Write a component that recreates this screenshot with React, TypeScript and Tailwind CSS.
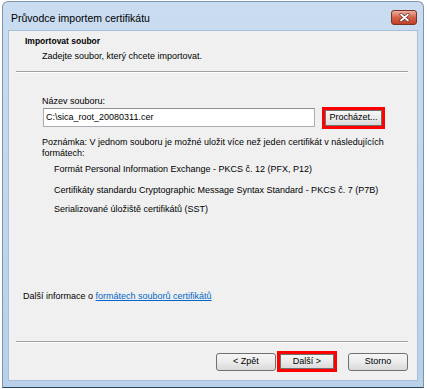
export default function App() {
  const btn =
    'flex items-center justify-center rounded-[3px] border border-[#707070] bg-gradient-to-b from-[#f6f6f6] via-[#ebebeb] to-[#d9d9d9] text-[9px] text-black';

  return (
    <div className="w-[427px] h-[389px] bg-white pl-[2px] pt-[1px] font-['Liberation_Sans',Arial,sans-serif] text-[9px] text-black">
      <div className="w-[422px] h-[387px] flex flex-col rounded-t-[6px] border border-[#7d94ae] border-b-[#2c4656] bg-gradient-to-b from-[#c9dcf0] to-[#b9d0ea] px-[5px] pb-[6px]">
        {/* title bar */}
        <div className="h-[28px] flex items-start justify-between">
          <div className="pl-[3px] pt-[9px] text-[10.5px] leading-[14px] text-black">
            Průvodce importem certifikátu
          </div>
          <div className="mt-[8px] mr-[1px] w-[26px] h-[15px] rounded-[3px] border border-[#7a3325] bg-gradient-to-b from-[#eab0a3] via-[#d5614a] to-[#c33e26] flex items-center justify-center">
            <svg width="11" height="9" viewBox="0 0 11 9">
              <path d="M2 1.5 L9 7.5 M9 1.5 L2 7.5" stroke="#5b2418" strokeWidth="3" strokeLinecap="round" />
              <path d="M2 1.5 L9 7.5 M9 1.5 L2 7.5" stroke="#ffffff" strokeWidth="1.8" strokeLinecap="round" />
            </svg>
          </div>
        </div>

        {/* content panel */}
        <div className="flex-1 flex flex-col bg-[#f0f0f0] border border-[#a9bfd8] pt-[4px]">
          <div className="pl-[16px] font-bold text-[8.5px] leading-[12px]">Importovat soubor</div>
          <div className="pl-[33px] mt-[3px] leading-[12px]">Zadejte soubor, který chcete importovat.</div>
          <div className="ml-[7px] mr-[9px] mt-[9px] border-t border-[#a0a0a0] border-b border-b-white" />

          <div className="pl-[33px]">
            <div className="mt-[22px] leading-[12px]">Název souboru:</div>
            <div className="flex items-start">
              <div className="ml-[1px] mt-[1px] w-[272px] h-[19px] bg-white border border-[#abadb3] border-t-[#8e8f8f] flex items-center pl-[2px]">
                C:\sica_root_20080311.cer
              </div>
              <div className="ml-[7px] w-[63px] h-[22px] border-[3px] border-[#ff0000]">
                <div className={btn + ' w-full h-full rounded-none border-[#8a8a8a]'}>Procházet...</div>
              </div>
            </div>
            <div className="mt-[8px] leading-[11px] pr-[30px]">
              Poznámka: V jednom souboru je možné uložit více než jeden certifikát v následujících formátech:
            </div>
            <div className="pl-[12px]">
              <div className="mt-[4px] leading-[12px]">Formát Personal Information Exchange - PKCS č. 12 (PFX, P12)</div>
              <div className="mt-[9px] leading-[12px]">
                Certifikáty standardu Cryptographic Message Syntax Standard - PKCS č. 7 (P7B)
              </div>
              <div className="mt-[7px] leading-[12px]">Serializované úložiště certifikátů (SST)</div>
            </div>
          </div>

          <div className="flex-1" />
          <div className="pl-[14px] leading-[12px]">
            Další informace o{' '}
            <span className="text-[#0066cc] underline">formátech souborů certifikátů</span>
          </div>
          <div className="ml-[7px] mr-[9px] mt-[39px] border-t border-[#a0a0a0] border-b border-b-white" />
          <div className="flex items-center justify-end mr-[9px] mt-[8px] mb-[8px]">
            <div className={btn + ' w-[60px] h-[18px]'}>&lt; Zpět</div>
            <div className="ml-[1px] w-[60px] h-[21px] border-[3px] border-[#ff0000]">
              <div className={btn + ' w-full h-full rounded-none border-[#8a8a8a]'}>Další &gt;</div>
            </div>
            <div className={btn + ' ml-[11px] w-[60px] h-[18px]'}>Storno</div>
          </div>
        </div>
      </div>
    </div>
  );
}
